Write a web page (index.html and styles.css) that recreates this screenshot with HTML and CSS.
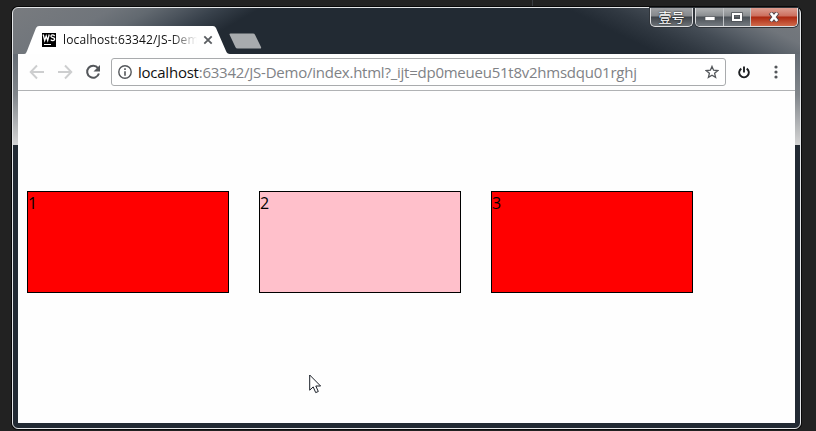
FILE: index.html
```html
<!DOCTYPE html>
<html lang="en">
<head>
<meta charset="utf-8">
<title>localhost:63342/JS-Demo</title>
<link rel="stylesheet" href="styles.css">
</head>
<body>
<div class="window">
  <header class="titlebar">
    <div class="tab">
      <svg class="tab-shape" width="206" height="28" viewBox="0 0 206 28"><path d="M0 28C2 28 2 27 3 25L12 2Q13 0 15 0H189Q191 0 192 2L202 25Q203 28 206 28Z" fill="#fff"/></svg>
      <svg class="favicon" width="14" height="14" viewBox="0 0 14 14"><path d="M0 0h14v14H0z"/><path d="M1.200 1.500l1.500 6L4.200 3l1.500 4.500L7.200 1.500M12.700 3C11.300 1.300 8.700 1.800 9 3.400s3.700 1 3.700 2.700S10 8.300 8.700 6.600" fill="none" stroke="#fff" stroke-width="1.300"/><path d="M2 11h7v1H2z" fill="#fff"/></svg>
      <span class="tab-title">localhost:63342/JS-Dem</span>
      <svg class="tab-close" width="10" height="10" viewBox="0 0 10 10"><path d="M1.300 1.300l7.400 7.400m0-7.400L1.300 8.700" stroke="#5a5d61" stroke-width="1.800"/></svg>
    </div>
    <svg class="new-tab" width="33" height="16" viewBox="0 0 33 16"><path d="M1.500 .5H24q1.500 0 2 1.300L32 14q.5 1.500-1 1.500H8.500q-1.500 0-2-1.300L.7 2Q0 .5 1.500 .5Z" fill="#a8abae"/></svg>
    <div class="user-button">壹号</div>
    <div class="controls">
      <div class="control"><svg class="minimize" width="12" height="5" viewBox="0 0 12 5"><path d="M1 .5h10v4H1z" fill="#fff" stroke="#4c5055" stroke-width=".7"/></svg></div>
      <div class="control maximize"><svg width="12" height="10" viewBox="0 0 12 10"><path d="M2 2h8v6H2z" fill="none" stroke="#4c5055" stroke-width="3.500"/><path d="M2 2h8v6H2z" fill="none" stroke="#fff" stroke-width="2"/></svg></div>
      <div class="control close"><svg width="12" height="10" viewBox="0 0 12 10"><path d="M2.500 .5l7 9m0-9l-7 9" stroke="#56454a" stroke-width="4.500"/><path d="M2.800 1l6.400 8m0-8L2.800 9" stroke="#fff" stroke-width="2.700"/></svg></div>
    </div>
  </header>
  <nav class="toolbar">
    <svg class="nav-icon" width="16" height="16" viewBox="0 0 16 16"><path d="M15 8H2M8 1.500L1.700 8 8 14.500" fill="none" stroke="#cdcecf" stroke-width="1.900"/></svg>
    <svg class="nav-icon" width="16" height="16" viewBox="0 0 16 16"><path d="M1 8h13M8 1.500L14.300 8 8 14.500" fill="none" stroke="#cdcecf" stroke-width="1.900"/></svg>
    <svg class="nav-icon" width="16" height="16" viewBox="0 0 16 16"><path d="M13 4.200A6 6 0 1 0 13.900 9.500" fill="none" stroke="#54575b" stroke-width="2"/><path d="M15 1v6.500H8.500z" fill="#54575b"/></svg>
    <div class="address">
      <svg width="14" height="14" viewBox="0 0 14 14"><circle cx="7" cy="7" r="6.200" fill="none" stroke="#54575b" stroke-width="1.400"/><path d="M6.200 3.300h1.600v1.600H6.200zM6.200 6.200h1.600v4.500H6.200z" fill="#54575b"/></svg>
      <span class="url"><b>localhost</b>:63342/JS-Demo/index.html?_ijt=dp0meueu51t8v2hmsdqu01rghj</span>
      <svg width="14" height="14" viewBox="0 0 14 14"><path d="M7 1.400l1.600 3.800 4.200.4-3.200 2.700 1 4.100L7 10.200l-3.600 2.200 1-4.100L1.200 5.600l4.200-.4z" fill="none" stroke="#54575b" stroke-width="1.300"/></svg>
    </div>
    <svg class="power" width="12" height="13" viewBox="0 0 12 13"><path d="M3.300 2.600a4.800 4.800 0 1 0 5.400 0M6 .5v6" fill="none" stroke="#1d1f22" stroke-width="1.900"/></svg>
    <svg class="menu" width="4" height="14" viewBox="0 0 4 14" fill="#54575b"><circle cx="2" cy="2" r="1.600"/><circle cx="2" cy="7" r="1.600"/><circle cx="2" cy="12" r="1.600"/></svg>
  </nav>
  <main class="page">
    <div class="box">1</div>
    <div class="box hover">2</div>
    <div class="box">3</div>
  </main>
  <svg class="pointer" width="13" height="20" viewBox="0 0 13 20"><path d="M.7 1v15.200l3.500-3.300 2.500 5.700 2.600-1.100-2.500-5.500h4.800z" fill="#fff" stroke="#1b2028" stroke-width="1"/></svg>
</div>
</body>
</html>
```
FILE: styles.css
```css
* { box-sizing: border-box; }
body {
  margin: 0;
  height: 431px;
  padding: 7px 15px 2px 12px;
  overflow: hidden;
  background: linear-gradient(#3a3d42, #3a3d42) 532px 0 / 1px 6px no-repeat, #222;
  font-family: "Open Sans", "Noto Sans CJK SC", sans-serif;
}
svg { display: block; flex: none; }
.window {
  position: relative;
  height: 422px;
  padding: 0 5px 5px;
  border: 1px solid #e4e6e8;
  border-radius: 6px;
  box-shadow: 0 0 0 1px #080808;
  background:
    linear-gradient(#656c74, #81868b 45%, #d4d4d4) 0 46px / 5px 91px no-repeat,
    linear-gradient(#656c74, #81868b 45%, #d4d4d4) 100% 46px / 5px 91px no-repeat,
    linear-gradient(150deg, #787b7f 0, #70757b 50px, #626970 70px, #4c545d 88px, #38414b 103px, #222a33 124px) 0 0 / 300px 46px no-repeat,
    linear-gradient(206deg, #787b7f 0, #70757b 32px, #5c636b 47px, #444c55 64px, #303841 84px, #222a33 103px) 100% 0 / 300px 46px no-repeat,
    #222a33;
}
.titlebar {
  display: flex;
  height: 46px;
  align-items: flex-start;
}
.tab {
  position: relative;
  display: flex;
  align-items: center;
  width: 206px;
  height: 28px;
  margin: 18px 0 0 6px;
  padding-left: 18px;
}
.tab-shape { position: absolute; inset: 0; }
.favicon, .tab-title, .tab-close { position: relative; }
.tab-title {
  width: 134px;
  margin-left: 7px;
  overflow: hidden;
  white-space: nowrap;
  font-size: 12px;
  letter-spacing: .15px;
  line-height: 20px;
  color: #111;
  -webkit-mask-image: linear-gradient(90deg, #000 108px, transparent 134px);
  mask-image: linear-gradient(90deg, #000 108px, transparent 134px);
}
.tab-close { margin-left: 6px; }
.new-tab { margin: 25px 0 0 -1px; }
.user-button, .controls {
  height: 19px;
  border: 1px solid #dedfe1;
  border-top: 0;
  border-radius: 0 0 5px 5px;
  box-shadow: 0 0 0 1px #30353b;
  overflow: hidden;
}
.user-button {
  width: 43px;
  margin-left: auto;
  background: linear-gradient(#a0a2a5 0, #85888c 8px, #3f444a 9px, #6c7176 100%);
  color: #fff;
  font-size: 13px;
  line-height: 19px;
  text-align: center;
  text-shadow: 0 0 2px #000;
}
.controls {
  display: flex;
  width: 103px;
  margin: 0 -3px 0 2px;
}
.control {
  display: flex;
  align-items: center;
  justify-content: center;
  width: 28px;
  border-right: 1px solid #c1c4c7;
  background: linear-gradient(#b0b2b4 0, #898d90 8px, #4b5157 9px, #747a80 100%);
}
.control.maximize { width: 27px; }
.control.close {
  flex: 1;
  border: 0;
  background: linear-gradient(#dd9e92 0, #cc6f5e 8px, #ac2811 9px, #d06a4b 100%);
}
.minimize { margin-top: 3px; }
.toolbar {
  display: flex;
  align-items: center;
  height: 37px;
  padding-left: 11px;
  border-bottom: 1px solid #b0b2b4;
  background: #fefefe;
}
.nav-icon { margin-right: 12px; }
.address {
  display: flex;
  align-items: center;
  width: 615px;
  height: 28px;
  margin-left: -2px;
  padding: 0 6px;
  border: 1px solid #a9abad;
  border-radius: 3px;
  background: #fff;
}
.url {
  flex: 1;
  margin-left: 6px;
  white-space: nowrap;
  color: #808286;
  font-size: 15px;
  letter-spacing: -.24px;
  line-height: 26px;
}
.url b { font-weight: 400; color: #111; }
.power { margin-left: 12px; }
.menu { margin-left: 24px; }
.page {
  display: flex;
  gap: 30px;
  height: 332px;
  padding: 100px 0 0 9px;
  background: #fefefe;
}
.box {
  width: 202px;
  height: 102px;
  border: 1px solid #000;
  background: #f00;
  color: #000;
  font-size: 16px;
  line-height: 22px;
}
.box.hover { background: #ffc0cb; }
.pointer { position: absolute; left: 296px; top: 366px; }
```
